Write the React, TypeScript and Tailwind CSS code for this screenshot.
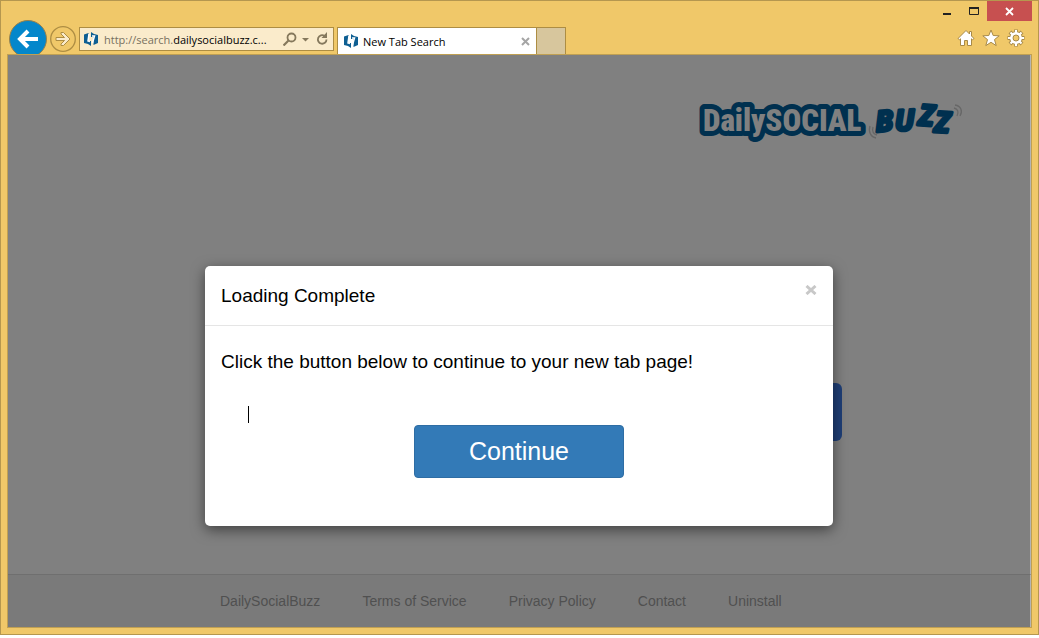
import React from "react";

const footerLinks = [
  "DailySocialBuzz",
  "Terms of Service",
  "Privacy Policy",
  "Contact",
  "Uninstall",
];

const SiteIcon: React.FC = () => (
  <svg width="14" height="16" viewBox="0 0 14 16" className="shrink-0" aria-hidden="true">
    <path d="M0 3.500 4.500 2v8H7v5l-3-2-4-1zM7 1l3 2 4 1v8l-4.500 2V6H7z" fill="#0e5f93" />
    <path d="M5 3 4 10l2 .5M8 5h2.500l-2 7" fill="none" stroke="#fff" strokeWidth="1.500" />
  </svg>
);

const Logo: React.FC = () => (
  <svg
    width="264"
    height="48"
    viewBox="0 0 264 48"
    className="overflow-visible"
    role="img"
    aria-label="DailySOCIAL Buzz"
  >
    <text
      x="4"
      y="32"
      fontSize="31"
      fontWeight="900"
      fill="#808080"
      stroke="#00304f"
      strokeWidth="10"
      strokeLinejoin="round"
      paintOrder="stroke"
      style={{ fontFamily: "'Roboto Condensed', 'Liberation Sans Narrow', sans-serif" }}
    >
      DailySOCIAL
    </text>
    <text
      x="177 196 219 235"
      y="33 32 26 33"
      rotate="-5 -3 4 3"
      fontSize="29"
      fontWeight="700"
      fontStyle="italic"
      fill="#00304f"
      stroke="#00304f"
      strokeWidth="3"
      strokeLinejoin="round"
      style={{ fontFamily: "'Open Sans', sans-serif" }}
    >
      BUZZ
    </text>
    <path
      d="M174 28c-1 4 0 7 4 8M171 27c-2 6 1 11 6 12M255 9c4 1 5 4 3 8M256 6c6 1 8 6 5 11"
      fill="none"
      stroke="#676767"
      strokeWidth="1.3"
    />
  </svg>
);

const TitleBar: React.FC = () => (
  <div className="flex h-[19px] items-start justify-end">
    <button aria-label="Minimize" className="h-5 w-[26px]">
      <svg width="26" height="20" aria-hidden="true">
        <path d="M8 12h8v2H8z" fill="#222" />
      </svg>
    </button>
    <button aria-label="Maximize" className="h-5 w-[26px]">
      <svg width="26" height="20" aria-hidden="true">
        <path d="M8.500 6.500h9v7h-9z" fill="none" stroke="#222" />
        <path d="M8 6h10v2H8z" fill="#222" />
      </svg>
    </button>
    <button aria-label="Close" className="h-5 w-[45px] bg-[#c75050]">
      <svg width="45" height="20" aria-hidden="true">
        <path d="m19 7 7 7M26 7l-7 7" stroke="#fff" strokeWidth="1.8" />
      </svg>
    </button>
  </div>
);

const AddressBar: React.FC = () => (
  <div className="mt-[7px] ml-[3px] flex h-6 w-[255px] items-center border border-[#ad8d43] bg-[#faebcb] pr-1 pl-1">
    <SiteIcon />
    <div className="ml-[6px] flex-1 whitespace-nowrap pt-[2px] text-[11px] leading-4 text-[#77705f]">
      http://search.<span className="text-black">dailysocialbuzz.c...</span>
    </div>
    <button aria-label="Search">
      <svg width="14" height="14" fill="none" stroke="#85785c" aria-hidden="true">
        <circle cx="8.500" cy="5.500" r="4" strokeWidth="1.8" />
        <path d="m5.500 8.500-5 5" strokeWidth="2.200" />
      </svg>
    </button>
    <button aria-label="Show address list" className="ml-[5px]">
      <svg width="8" height="14" aria-hidden="true">
        <path d="M0 6h7L3.500 9.500z" fill="#85785c" />
      </svg>
    </button>
    <button aria-label="Refresh" className="ml-[6px]">
      <svg width="13" height="14" aria-hidden="true">
        <path d="M10.500 7.500A4.300 4.300 0 1 1 8.500 3.800" fill="none" stroke="#85785c" strokeWidth="1.8" />
        <path d="M11 0v6H5.500z" fill="#85785c" />
      </svg>
    </button>
  </div>
);

const Toolbar: React.FC = () => (
  <div className="flex h-[34px] items-start overflow-hidden pl-[2px]">
    <button aria-label="Back" className="h-[38px] w-[38px] shrink-0">
      <svg width="38" height="38" aria-hidden="true">
        <circle cx="19" cy="19" r="18.500" fill="#0487cb" stroke="#97804b" />
        <path d="M29 19H11M19 11l-8 8 8 8" fill="none" stroke="#fff" strokeWidth="4" />
      </svg>
    </button>
    <button aria-label="Forward" className="mt-[6px] ml-[3px] h-[26px] w-[26px] shrink-0">
      <svg width="26" height="26" aria-hidden="true">
        <circle cx="13" cy="13" r="12.300" fill="none" stroke="#ad8d43" strokeWidth="1.3" />
        <path
          d="M6 11.500h8.500L11 8V6.500h2.500l6.500 6.500-6.500 6.500H11V18l3.500-3.500H6z"
          fill="#faebcb"
          stroke="#ad8d43"
        />
      </svg>
    </button>
    <AddressBar />
    <div className="mt-[7px] ml-[3px] flex h-[27px] w-[200px] items-center border border-b-0 border-[#ad8d43] bg-white px-[6px]">
      <SiteIcon />
      <span className="ml-[5px] flex-1 whitespace-nowrap pt-[2px] text-[11px] leading-4 text-black">
        New Tab Search
      </span>
      <button aria-label="Close tab">
        <svg width="9" height="9" aria-hidden="true">
          <path d="m1 1 7 7M8 1 1 8" stroke="#a5a5a5" strokeWidth="2" />
        </svg>
      </button>
    </div>
    <button
      aria-label="New tab"
      className="mt-[7px] h-[27px] w-[29px] border border-b-0 border-l-0 border-[#ad8d43] bg-[#d7c69d]"
    />
    <div className="mt-[9px] mr-[7px] ml-auto flex gap-[7px]">
      <button aria-label="Home">
        <svg width="18" height="18" aria-hidden="true">
          <path
            d="M9 1.500 1 9.500l1.500 1.200 1-.9V16.500h4v-5h3v5h4V9.800l1 .9L17 9.500l-2.500-2.500V2.500h-2v2.500z"
            fill="#fff"
            stroke="#a88a48"
          />
        </svg>
      </button>
      <button aria-label="Favorites">
        <svg width="18" height="18" aria-hidden="true">
          <path
            d="m9 1 2.200 5.500 6 .3-4.700 3.800 1.700 6L9 13.300l-5.200 3.300 1.700-6L.8 6.800l6-.3z"
            fill="#fff"
            stroke="#a88a48"
          />
        </svg>
      </button>
      <button aria-label="Tools">
        <svg width="18" height="18" aria-hidden="true">
          <g fill="none" stroke="#a88a48">
            <circle cx="9" cy="9" r="4.800" strokeWidth="4" />
            <path d="M9 .5v17M.5 9h17M3 3l12 12M15 3 3 15" strokeWidth="4" />
          </g>
          <g fill="none" stroke="#fff">
            <path d="M9 1v16M1 9h16M3.500 3.500l11 11M14.500 3.500l-11 11" strokeWidth="2.200" />
            <circle cx="9" cy="9" r="4.600" strokeWidth="2.600" />
          </g>
          <circle cx="9" cy="9" r="3" fill="#f0c869" stroke="#a88a48" />
        </svg>
      </button>
    </div>
  </div>
);

const Modal: React.FC = () => (
  <div className="absolute inset-0 flex items-start justify-center pt-[211px] pr-px">
    <div
      role="dialog"
      aria-labelledby="modal-title"
      className="w-[628px] rounded-[5px] bg-white text-[19px] leading-7 text-black shadow-[0_4px_14px_rgba(0,0,0,0.5)]"
    >
      <div className="flex items-start justify-between border-b border-[#e5e5e5] p-4 pb-[15px]">
        <h1 id="modal-title">Loading Complete</h1>
        <button aria-label="Close dialog" className="mt-[3px]">
          <svg width="12" height="10" aria-hidden="true">
            <path d="m1.500 1 9 8M10.500 1l-9 8" stroke="#c8c8c8" strokeWidth="3" />
          </svg>
        </button>
      </div>
      <div className="px-4 pt-[22px] pb-12">
        <p>Click the button below to continue to your new tab page!</p>
        <div className="mt-[30px] ml-[27px] h-[17px] w-px bg-black" />
        <button className="mx-auto mt-[2px] block h-[53px] w-[210px] rounded-[4px] border border-[#2e6da4] bg-[#337ab7] pb-[2px] text-[25px] text-white">
          Continue
        </button>
      </div>
    </div>
  </div>
);

const App: React.FC = () => {
  return (
    <div className="h-screen bg-white pb-[3px] font-['Open_Sans',sans-serif]">
      <div className="flex h-full flex-col border border-[#b5974f] bg-[#f0c869] px-[6px] pb-[6px]">
        <TitleBar />
        <Toolbar />
        <div className="relative flex flex-1 flex-col border border-[#c0a053] bg-[#808080] font-['Liberation_Sans',sans-serif]">
          <main className="flex flex-1 flex-col items-end border-r border-[#b4b4b4]">
            <div className="mt-[44px] mr-[67px]">
              <Logo />
            </div>
            <button
              aria-label="Search the web"
              className="mt-[236px] mr-[188px] h-[58px] w-[110px] rounded-[6px] bg-[#1f3f77]"
            />
          </main>
          <footer className="flex h-[53px] items-center gap-[42px] border-t border-r border-t-[#6f6f6f] border-r-[#b4b4b4] bg-[#7a7a7a] pl-[212px] text-[14px] text-[#505050]">
            {footerLinks.map((label) => (
              <a key={label} href="#">
                {label}
              </a>
            ))}
          </footer>
          <Modal />
        </div>
      </div>
    </div>
  );
};

export default App;
